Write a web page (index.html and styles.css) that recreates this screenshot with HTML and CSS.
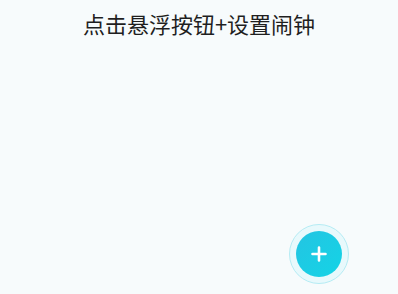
FILE: index.html
```html
<!DOCTYPE html>
<html lang="zh-CN">
<head>
    <meta charset="UTF-8">
    <meta name="viewport" content="width=device-width, initial-scale=1.0">
    <title>闹钟</title>
    <link rel="stylesheet" href="styles.css">
</head>
<body>
    <div class="page">
        <h1 class="hint-title">点击悬浮按钮+设置闹钟</h1>
        <div class="alarm-list"></div>
    </div>
    <button class="fab" aria-label="添加闹钟">
        <span class="fab-inner">
            <svg width="16" height="16" viewBox="0 0 16 16">
                <path d="M8 1.5v13M1.5 8h13" stroke="#fff" stroke-width="2.6" stroke-linecap="round" fill="none"/>
            </svg>
        </span>
    </button>
</body>
</html>
```

FILE: styles.css
```css
html, body {
    margin: 0;
    padding: 0;
    height: 100%;
}

body {
    font-family: "Noto Sans CJK SC", "Noto Sans", sans-serif;
    background-color: #f7fbfc;
    color: #1f1f1f;
    overflow: hidden;
}

.page {
    display: flex;
    flex-direction: column;
    align-items: center;
    padding-top: 7px;
}

.hint-title {
    margin: 0;
    font-size: 22px;
    font-weight: 400;
    line-height: 32px;
    text-align: center;
}

.fab {
    position: absolute;
    right: 49px;
    bottom: 10px;
    width: 60px;
    height: 60px;
    padding: 0;
    border: 1px solid #b5ecf4;
    border-radius: 50%;
    background: #e8f9fc;
    display: flex;
    align-items: center;
    justify-content: center;
    cursor: pointer;
}

.fab-inner {
    width: 46px;
    height: 46px;
    border-radius: 50%;
    background: linear-gradient(135deg, #24c4e2 0%, #14d4e6 100%);
    display: flex;
    align-items: center;
    justify-content: center;
}
```
